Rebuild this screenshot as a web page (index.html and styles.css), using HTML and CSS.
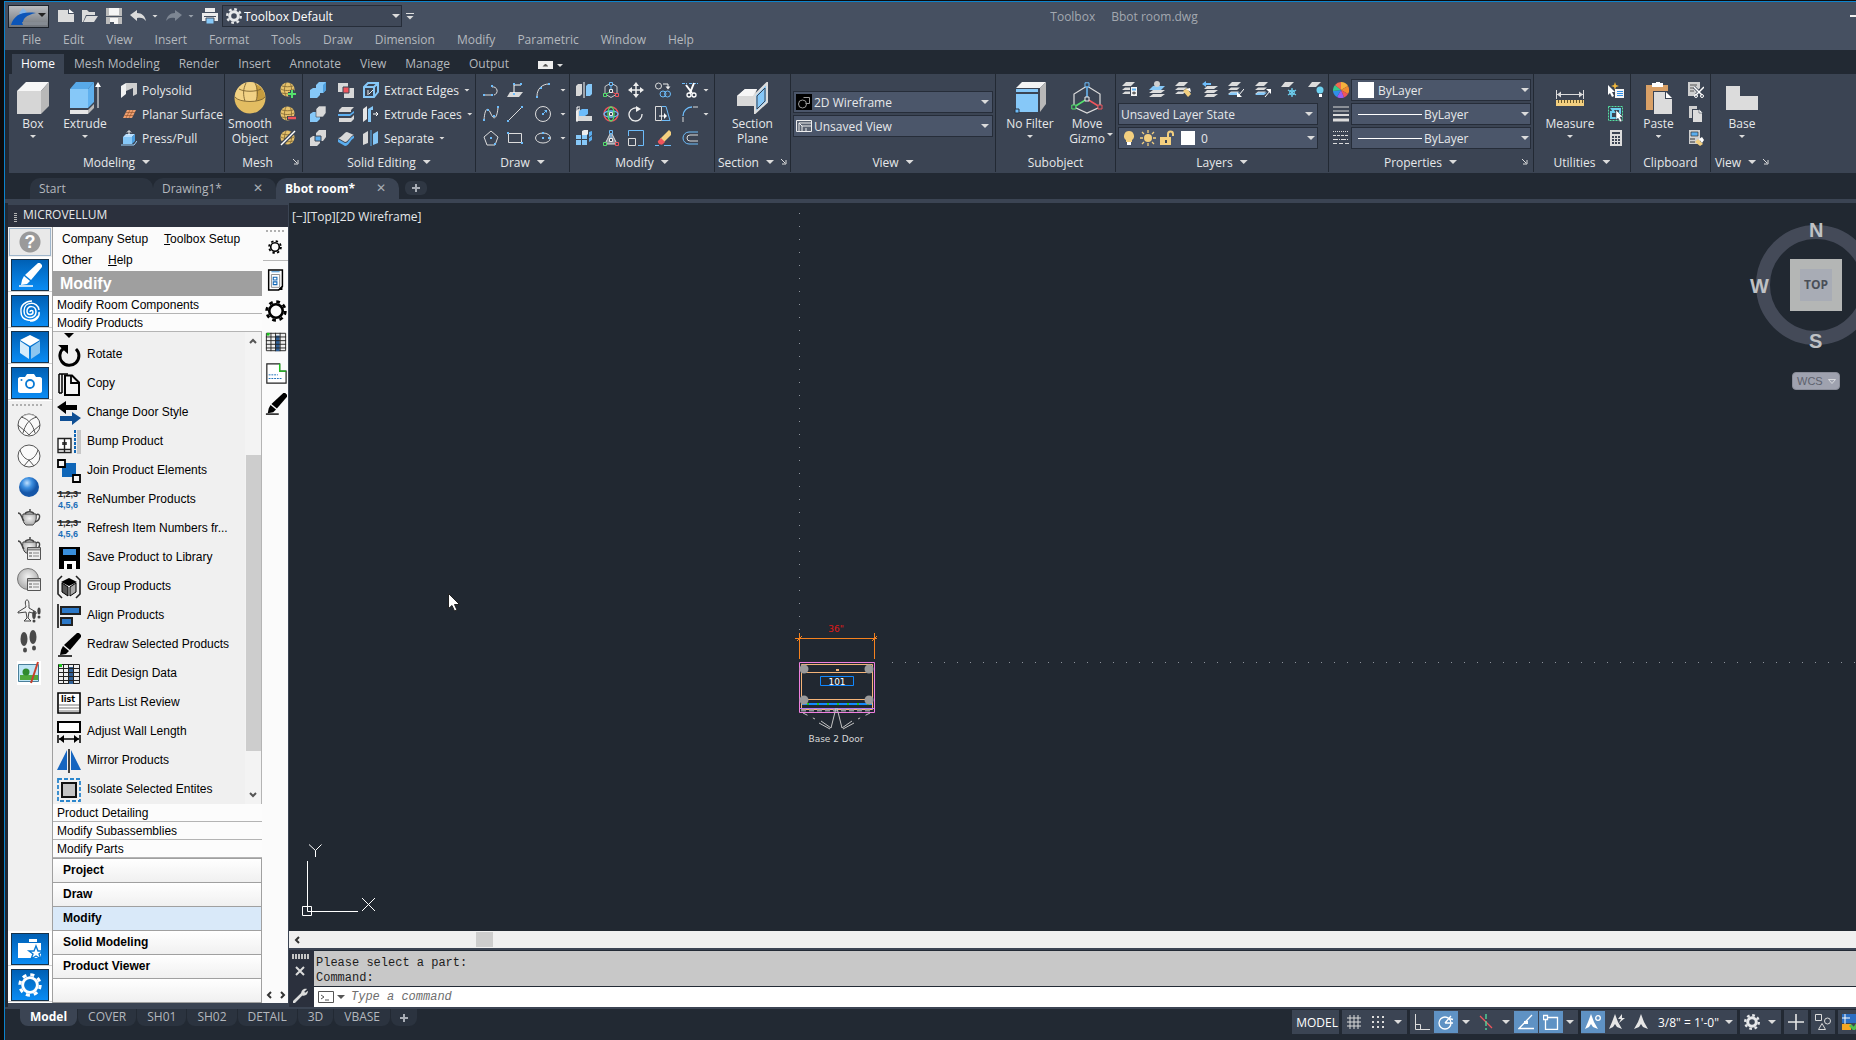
FILE: index.html
```
<!DOCTYPE html>
<html lang="en">
<head>
  <meta charset="UTF-8">
  <title>Toolbox - Bbot room.dwg</title>
  <meta name="viewport" content="width=device-width, initial-scale=1.0">
  <link rel="stylesheet" href="styles.css">
</head>
<body>

  <!-- icon sprite -->
  <svg class="sprite" aria-hidden="true">
    <defs>
      <linearGradient id="g-steel" x1="0" y1="0" x2="0" y2="1"><stop offset="0" stop-color="#b9bcc0"/><stop offset="1" stop-color="#6f747b"/></linearGradient>
      <radialGradient id="g-ball" cx=".4" cy=".3"><stop offset="0" stop-color="#bfe0ff"/><stop offset=".5" stop-color="#3d8fe0"/><stop offset="1" stop-color="#1556a8"/></radialGradient>
      <radialGradient id="g-grey" cx=".5" cy=".4"><stop offset="0" stop-color="#f4f4f4"/><stop offset="1" stop-color="#b5b5b5"/></radialGradient>
    </defs>
    <symbol id="i-new" viewBox="0 0 16 16"><path d="M0 2h10v4h6v8H0z" fill="#dcdcdc"/><path d="M11 1l5 4h-5z" fill="#fff"/></symbol>
    <symbol id="i-open" viewBox="0 0 16 16"><path d="M0 14V2h5l2 2h6v3H4L1 14z" fill="#dcdcdc"/><path d="M4.500 8H16l-4 6H1.500z" fill="#dcdcdc"/></symbol>
    <symbol id="i-save" viewBox="0 0 16 16"><path d="M0 0h16v16H0z" fill="#bcbcbc"/><path d="M3 0h10v7H3zM4 10h8v6H4z" fill="#f5f5f5"/><path d="M0 8h16v1H0zM4 14h4v2H4z" fill="#4a5362"/></symbol>
    <symbol id="i-undo" viewBox="0 0 16 16"><path d="M0 7l7-5v3c5 0 8 3 9 8-2-3-5-4-9-3v3z" fill="#dcdcdc"/></symbol>
    <symbol id="i-redo" viewBox="0 0 16 16"><path d="M16 7L9 2v3C4 5 1 8 0 13c2-3 5-4 9-3v3z" fill="#7d8693"/></symbol>
    <symbol id="i-print" viewBox="0 0 16 16"><path d="M3 0h10v4H3zM0 5h16v8H0z" fill="#ececec"/><path d="M2 8h12v1H2z" fill="#465061"/><path d="M4 10h8v6H4z" fill="#86c8f8" stroke="#465061"/></symbol>
    <symbol id="i-gear" viewBox="0 0 16 16"><g fill="none" stroke="currentColor"><circle cx="8" cy="8" r="4.300" stroke-width="3"/><circle cx="8" cy="8" r="6.800" stroke-width="2.400" stroke-dasharray="2.700 2.640"/></g></symbol>
    <symbol id="i-gear-thin" viewBox="0 0 16 16"><g fill="none" stroke="currentColor"><circle cx="8" cy="8" r="4.900" stroke-width="1.900"/><circle cx="8" cy="8" r="6.800" stroke-width="2" stroke-dasharray="2.700 2.640"/></g></symbol>
    <symbol id="i-launch" viewBox="0 0 6 6"><path d="M0 0l4 4M5 1v4H1" fill="none" stroke="#dcdcdc"/></symbol>

    <!-- modeling -->
    <symbol id="i-box" viewBox="0 0 32 32"><path d="M0 9L9 0h23l-8 9z" fill="#f7f7f7"/><path d="M0 9h24v23H0z" fill="#d6d6d6"/><path d="M24 9l8-9v24l-8 8z" fill="#b8b8b8"/></symbol>
    <symbol id="i-extrude" viewBox="0 0 32 32"><path d="M1 7l6-7h18l-6 7z" fill="#58a9e8"/><path d="M1 7h18v19H1z" fill="#86c8f8"/><path d="M19 7l6-7v20l-6 6z" fill="#5fb0ee"/><path d="M1 28h18v4H1z" fill="#e6e6e6"/><path d="M19 28l6-6v4l-6 6z" fill="#b8b8b8"/><path d="M29 4v22" stroke="#fff"/><path d="M26 5l3-5 3 5z" fill="#fff"/></symbol>
    <symbol id="i-polysolid" viewBox="0 0 16 16"><path d="M0 4l5-3v11l-5 4z" fill="#f2f2f2"/><path d="M5 1h11v11l-4 2V6L5 9z" fill="#cfcfcf"/></symbol>
    <symbol id="i-planar" viewBox="0 0 16 16"><path d="M6 4h9l-4 8H2z" fill="#f0a070"/><path d="M5 6.500h9M3.500 9.500h9M9 4l-4 8M12 4l-4 8" stroke="#8a4f2c" stroke-width=".6"/></symbol>
    <symbol id="i-press" viewBox="0 0 16 16"><path d="M2 7l3-3h9l-3 3z" fill="#b9e0ff"/><path d="M2 7h9v7H2z" fill="#86c8f8"/><path d="M11 7l3-3v7l-3 3z" fill="#4c9fe0"/><path d="M0 15h13l3-4" fill="none" stroke="#9ed4ff"/><path d="M8 5V1M6 2.500L8 .5l2 2" fill="none" stroke="#fff"/></symbol>
    <!-- mesh -->
    <symbol id="i-ball" viewBox="0 0 32 32"><circle cx="16" cy="16" r="15.500" fill="#e3bd62"/><path d="M1 15a15 15 0 0 1 30 0c-4 6-26 6-30 0z" fill="#f2d285"/><path d="M22 2c6 3 9 8 9 13-1 2-4 3-8 4z" fill="#c79d3f"/><g fill="none" stroke="#7c6330" stroke-width=".9"><path d="M1 15c4 6 26 6 30 0M5 7c5 3 17 3 22 0M12 1c-3 6-3 12-1 18M21 1c3 6 3 12 1 18"/></g></symbol>
    <symbol id="i-mball" viewBox="0 0 16 16"><circle cx="7.500" cy="7.500" r="7" fill="#e6c26c"/><g fill="none" stroke="#7c6330" stroke-width=".8"><path d="M1 7c3 2 10 2 13 0M2 4c3 1 8 1 11 0M2 11c3 1 8 1 11 0M6 1c-2 4-2 9 0 13M10 1c2 4 2 9 0 13"/></g></symbol>
    <symbol id="i-more" viewBox="0 0 16 16"><use href="#i-mball"/><path d="M12 8v8M8 12h8" stroke="#3b4453" stroke-width="4"/><path d="M12 8v8M8 12h8" stroke="#54e06c" stroke-width="2"/></symbol>
    <symbol id="i-less" viewBox="0 0 16 16"><use href="#i-mball"/><path d="M7 12h9" stroke="#3b4453" stroke-width="4"/><path d="M8 12h8" stroke="#f0555c" stroke-width="2.500"/></symbol>
    <symbol id="i-crease" viewBox="0 0 16 16"><use href="#i-mball"/><path d="M1 15L15 1" stroke="#3b4453" stroke-width="4"/><path d="M1 15L15 1" stroke="#fff" stroke-width="1.400"/></symbol>
    <!-- solid editing -->
    <symbol id="i-union" viewBox="0 0 16 16"><path d="M0 8l3-2h3V3l3-3h7v8l-3 3h-3v2l-3 3H0z" fill="#86c8f8"/><path d="M16 0v8l-3 3V3z" fill="#4f9fdd"/></symbol>
    <symbol id="i-subtract" viewBox="0 0 16 16"><path d="M0 8l3-2h7v7l-3 3H0z" fill="#86c8f8"/><path d="M6 3l3-3h7v7l-3 4H6z" fill="#d8d8d8" stroke="#3b4453" stroke-width=".6"/></symbol>
    <symbol id="i-intersect" viewBox="0 0 16 16"><path d="M0 8l3-2h7v7l-3 3H0zM6 3l3-3h7v7l-3 4H6z" fill="#d8d8d8"/><path d="M5 6h6v5H5z" fill="#5aaef0" stroke="#3b4453"/></symbol>
    <symbol id="i-interfere" viewBox="0 0 16 16"><path d="M0 1h10v4H5v5H0zM11 6h5v10H6v-5h5z" fill="#d8d8d8"/><path d="M5 5h6v6H5z" fill="#f0555c" stroke="#3b4453"/></symbol>
    <symbol id="i-slice" viewBox="0 0 16 16"><path d="M1 4l3-3h12l-3 3v2H1zM1 12h12l3-3v4l-3 3H1z" fill="#d8d8d8"/><path d="M0 8h12l4-3v2l-4 3H0z" fill="#5aaef0"/></symbol>
    <symbol id="i-thicken" viewBox="0 0 16 16"><path d="M0 8c4 0 6-6 9-6l7 3c-3 0-6 7-9 7z" fill="#d8d8d8"/><path d="M0 9v3l7 4c4 0 5-6 9-8V6c-4 0-5 7-9 7z" fill="#5aaef0"/></symbol>
    <symbol id="i-edges" viewBox="0 0 16 16"><path d="M1 5l4-4h10v9l-4 5H1zM1 5h10v10M11 5l4-4" fill="none" stroke="#86c8f8" stroke-width="2"/><path d="M6 12l4-4M5 8v5" stroke="#eee"/></symbol>
    <symbol id="i-faces" viewBox="0 0 16 16"><path d="M0 3l4-3v13l-4 3z" fill="#e6e6e6"/><path d="M5 3l5-3v4h-2v12H5z" fill="#86c8f8"/><path d="M10 8h5M13 6l2 2-2 2" fill="none" stroke="#fff"/></symbol>
    <symbol id="i-separate" viewBox="0 0 16 16"><path d="M0 4l5-3v12l-5 2z" fill="#d8d8d8"/><path d="M8 0v16" stroke="#5aaef0"/><path d="M10 4l5-3v12l-5 2z" fill="#86c8f8"/></symbol>
    <!-- draw -->
    <symbol id="i-pline" viewBox="0 0 16 16"><path d="M1 13h8M9 5a4 4 0 1 1 2 8" fill="none" stroke="#dcdcdc"/><path d="M0 12h2v2H0zM8 12h2v2H8zM8 3h2v2H8z" fill="#6dbcfa"/></symbol>
    <symbol id="i-3dpoly" viewBox="0 0 16 16"><path d="M3 10h13l-4 5H0z" fill="#d8d8d8"/><path d="M7 12V3h7" fill="none" stroke="#fff"/><path d="M6 11h2v2H6zM6 1h2v2H6zM13 1h2v2h-2z" fill="#6dbcfa"/></symbol>
    <symbol id="i-arc" viewBox="0 0 16 16"><path d="M2 14C2 7 7 2 14 2" fill="none" stroke="#dcdcdc"/><path d="M1 14h2v2H1zM5 5h2v2H5zM13 1h2v2h-2z" fill="#6dbcfa"/></symbol>
    <symbol id="i-spline" viewBox="0 0 16 16"><path d="M1 14C2 1 5 1 8 8s6 4 7-6" fill="none" stroke="#dcdcdc"/><path d="M0 13h2v2H0zM4 3h2v2H4zM10 9h2v2h-2zM14 0h2v2h-2z" fill="#6dbcfa"/></symbol>
    <symbol id="i-line" viewBox="0 0 16 16"><path d="M2 14L14 2" stroke="#dcdcdc"/><path d="M0 14h2v2H0zM14 0h2v2h-2z" fill="#6dbcfa"/></symbol>
    <symbol id="i-circle" viewBox="0 0 16 16"><circle cx="8" cy="8" r="7.500" fill="none" stroke="#dcdcdc"/><path d="M7 7h2v2H7zM9 4h3v3" fill="#6dbcfa"/><path d="M8 8l4-4" stroke="#6dbcfa"/></symbol>
    <symbol id="i-polygon" viewBox="0 0 16 16"><path d="M8 1l7 6-3 8H4L1 7z" fill="none" stroke="#dcdcdc"/><path d="M7 7h2v2H7zM11 13h2v2h-2z" fill="#6dbcfa"/></symbol>
    <symbol id="i-rect" viewBox="0 0 16 16"><path d="M1.500 3.500h13v9h-13z" fill="none" stroke="#dcdcdc"/><path d="M0 2h2v2H0zM14 12h2v2h-2z" fill="#6dbcfa"/></symbol>
    <symbol id="i-ellipse" viewBox="0 0 16 16"><ellipse cx="8" cy="8" rx="7.500" ry="5" fill="none" stroke="#dcdcdc"/><path d="M7 7h2v2H7zM13 7h2v2h-2zM7 2h2v2H7z" fill="#6dbcfa"/></symbol>
    <!-- modify -->
    <symbol id="i-mirror3d" viewBox="0 0 16 16"><path d="M0 4l2-2h4v10l-2 2H0z" fill="#d8d8d8"/><path d="M8 0v16" stroke="#fff"/><path d="M10 4l2-2h4v10l-2 2h-4z" fill="#86c8f8"/></symbol>
    <symbol id="i-gizmo" viewBox="0 0 16 16"><path d="M8 1l6 3.500V12l-6 3.500L2 12V4.500z" fill="none" stroke="#c8c8c8"/><path d="M8 9V2" stroke="#6dbcfa"/><path d="M8 9l-6 4" stroke="#54e06c"/><path d="M8 9l6 4" stroke="#f0555c"/><path d="M6.500 .5h3v3h-3z" fill="#3b4453" stroke="#6dbcfa"/><path d="M.5 11.500h3v3h-3z" fill="#3b4453" stroke="#54e06c"/><path d="M12.500 11.500h3v3h-3z" fill="#3b4453" stroke="#f0555c"/><path d="M6.500 7.500h3v3h-3z" fill="#3b4453" stroke="#eee"/></symbol>
    <symbol id="i-move" viewBox="0 0 16 16"><path d="M8 2v12M2 8h12" stroke="#eee" stroke-width="1.500"/><path d="M5 4l3-4 3 4zM5 12l3 4 3-4zM4 5L0 8l4 3zM12 5l4 3-4 3z" fill="#eee"/></symbol>
    <symbol id="i-copy3" viewBox="0 0 16 16"><g fill="none"><circle cx="3.500" cy="4" r="3" stroke="#dcdcdc"/><circle cx="8" cy="12" r="3" stroke="#6dbcfa"/><circle cx="12.500" cy="12" r="3" stroke="#6dbcfa"/><path d="M8 2h5v4" stroke="#eee"/></g><path d="M10.500 4.500h5l-2.500 3z" fill="#eee"/></symbol>
    <symbol id="i-trim" viewBox="0 0 16 16"><path d="M0 1.500h5M7 1.500h9" stroke="#6dbcfa" stroke-dasharray="3 1"/><path d="M4 3l6 8M12 1l-4 10" stroke="#fff" stroke-width="2"/><circle cx="7" cy="13" r="2" fill="none" stroke="#fff" stroke-width="1.300"/><circle cx="12" cy="13" r="2" fill="none" stroke="#fff" stroke-width="1.300"/></symbol>
    <symbol id="i-align3d" viewBox="0 0 16 16"><path d="M0 5l4-3v8h12v5H0z" fill="#d8d8d8"/><path d="M3 5l3-2h6v5l-3 2H3z" fill="#6dbcfa"/><path d="M1 16V1h3" stroke="#fff" fill="none"/></symbol>
    <symbol id="i-rot3d" viewBox="0 0 16 16"><g fill="none"><circle cx="8" cy="8" r="7" stroke="#f0555c" stroke-width="1.400"/><ellipse cx="8" cy="8" rx="7" ry="3" stroke="#6dbcfa" stroke-width="1.300"/><ellipse cx="8" cy="8" rx="3" ry="7" stroke="#54e06c" stroke-width="1.300"/></g><path d="M6.500 6.500h3v3h-3z" fill="#3b4453" stroke="#eee"/></symbol>
    <symbol id="i-rotate" viewBox="0 0 16 16"><path d="M11 3a6.500 6.500 0 1 0 3 5" fill="none" stroke="#eee" stroke-width="1.300"/><path d="M8 0l5 3-5 3z" fill="#eee"/></symbol>
    <symbol id="i-stretch" viewBox="0 0 16 16"><path d="M.5 .5h6v14h-6z" fill="none" stroke="#dcdcdc"/><path d="M7 .5h4l4 14H7" fill="none" stroke="#6dbcfa"/><path d="M4 10h5" stroke="#fff"/><path d="M9 7l3 3-3 3z" fill="#fff"/></symbol>
    <symbol id="i-fillet" viewBox="0 0 16 16"><path d="M1 16v-5" stroke="#dcdcdc"/><path d="M1 10c0-5 4-9 9-9" fill="none" stroke="#6dbcfa" stroke-width="1.400"/><path d="M11 1h5" stroke="#dcdcdc"/></symbol>
    <symbol id="i-array" viewBox="0 0 16 16"><path d="M0 5h5v4H0zM6 5h5v4H6zM0 10h5v5H0zM6 10h5v5H6z" fill="#86c8f8"/><path d="M6 1l2-1h4v4l-1 1H6z" fill="#eee"/><path d="M13 2l3-1v4l-3 2zM13 8l3-2v4l-3 2z" fill="#5aaef0"/></symbol>
    <symbol id="i-scale3d" viewBox="0 0 16 16"><path d="M8 2l6 12H2z" fill="#8a909a" stroke="#dcdcdc"/><path d="M8 9V2" stroke="#6dbcfa"/><path d="M6.500 .5h3v3h-3z" fill="#3b4453" stroke="#6dbcfa"/><path d="M.5 12.500h3v3h-3z" fill="#3b4453" stroke="#54e06c"/><path d="M12.500 12.500h3v3h-3z" fill="#3b4453" stroke="#f0555c"/><path d="M6.500 8.500h3v3h-3z" fill="#3b4453" stroke="#eee"/></symbol>
    <symbol id="i-scale" viewBox="0 0 16 16"><path d="M.5 8.500h7v7h-7z" fill="none" stroke="#dcdcdc"/><path d="M.5 6V.5h15v15H10" fill="none" stroke="#6dbcfa"/></symbol>
    <symbol id="i-erase" viewBox="0 0 16 16"><path d="M5 9L14 0l2 2v3l-8 8z" fill="#f3cf7f"/><path d="M3 11l3-3 4 4-2 2c-2 2-6-1-5-3z" fill="#f0555c"/><path d="M0 15.500h4M9 15.500h7" stroke="#6dbcfa"/></symbol>
    <symbol id="i-offset" viewBox="0 0 16 16"><path d="M16 2H7a6 6 0 0 0 0 12h9" fill="none" stroke="#6dbcfa"/><path d="M16 5H8a3 3 0 0 0 0 6h8" fill="none" stroke="#dcdcdc"/></symbol>
    <!-- section / subobject -->
    <symbol id="i-section" viewBox="0 0 32 32"><path d="M0 14l8-7h12l-2 6v11H0z" fill="#d8d8d8"/><path d="M0 14l8-7h12l-4 7z" fill="#f6f6f6"/><path d="M18 13L30 1v19L18 31z" fill="#86c8f8" stroke="#dcdcdc" stroke-width="2"/><path d="M20 14l8-8v13l-8 8z" fill="none" stroke="#3b4453"/></symbol>
    <symbol id="i-filter" viewBox="0 0 32 32"><path d="M2 6l6-6h24l-6 6z" fill="#f4f4f4"/><path d="M26 6l6-6v22l-6 8z" fill="#b8b8b8"/><path d="M2 7h22v3H2zM2 12h22v18H2z" fill="#86c8f8"/><path d="M1 27h4v4H1z" fill="#6dbcfa" stroke="#2b333f"/></symbol>
    <symbol id="i-gizmo-l" viewBox="0 0 32 32"><path d="M16 4l13 8v13l-13 6-13-6V12z" fill="none" stroke="#dcdcdc" stroke-width="1.200"/><path d="M16 17V4" stroke="#6dbcfa" stroke-width="1.500"/><path d="M16 17L3 25" stroke="#54e06c" stroke-width="1.500"/><path d="M16 17l13 8" stroke="#f0555c" stroke-width="1.500"/><path d="M14 .8h4v4h-4z" fill="#3b4453" stroke="#6dbcfa"/><path d="M.8 23h4v4h-4z" fill="#3b4453" stroke="#54e06c"/><path d="M27 23h4v4h-4z" fill="#3b4453" stroke="#f0555c"/><path d="M14 15h4v4h-4z" fill="#3b4453" stroke="#eee"/></symbol>
    <!-- layers -->
    <symbol id="i-stack" viewBox="0 0 16 16"><path d="M4 1h9l-4 4H0zM3 6.500h9L9 9H0zM3 10.500h8L8 13H0z" fill="#dcdcdc"/></symbol>
    <symbol id="i-lay1" viewBox="0 0 16 16"><use href="#i-stack"/><path d="M8.500 5.500h7v10h-7z" fill="#f4f4f4" stroke="#3b4453"/><path d="M10 7.500h4v2h-4z" fill="#5aaef0"/><path d="M10 12h4M12 10.500v3" stroke="#333"/></symbol>
    <symbol id="i-lay2" viewBox="0 0 16 16"><path d="M4 9h12l-4 3H0zM4 13h12l-4 3H0z" fill="#dcdcdc"/><path d="M4 5h12l-4 4H0z" fill="#86c8f8"/><circle cx="8" cy="3" r="3" fill="#cfcfcf"/></symbol>
    <symbol id="i-lay3" viewBox="0 0 16 16"><use href="#i-stack"/><path d="M8 10l4-3 4 6-3 3z" fill="#f3cf7f"/><path d="M11 8l4-1 1 4z" fill="#fff"/></symbol>
    <symbol id="i-lay4" viewBox="0 0 16 16"><path d="M5 5h11l-4 3H2zM5 9h11l-4 3H2zM5 13h11l-4 3H2z" fill="#dcdcdc"/><path d="M0 3l4-3v2h5v2H4v2z" fill="#6dbcfa"/></symbol>
    <symbol id="i-lay5" viewBox="0 0 16 16"><use href="#i-stack"/><path d="M3 11.500h9L9 14H0z" fill="#86c8f8"/><path d="M16 8l-5 6" stroke="#fff"/><path d="M9 16v-5l5 5z" fill="#fff"/></symbol>
    <symbol id="i-lay6" viewBox="0 0 16 16"><use href="#i-stack"/><path d="M3 11.500h9L9 14H0z" fill="#86c8f8"/><path d="M10 16l5-6" stroke="#fff"/><path d="M16 8v5l-5-5z" fill="#fff"/></symbol>
    <symbol id="i-lay7" viewBox="0 0 16 16"><path d="M4 1h9L8 6H0z" fill="#dcdcdc"/><path d="M11 7v9M7 9l8 5M15 9l-8 5" stroke="#6dd0f0" stroke-width="1.300"/><circle cx="11" cy="11.500" r="2.500" fill="none" stroke="#6dd0f0"/></symbol>
    <symbol id="i-lay8" viewBox="0 0 16 16"><path d="M4 1h9L8 6H0z" fill="#dcdcdc"/><circle cx="12" cy="9" r="3.500" fill="#6dd0f0"/><path d="M11 13h3v3h-3z" fill="#fff"/></symbol>
    <symbol id="i-bulb" viewBox="0 0 16 16"><path d="M8 1a5 5 0 0 1 3 9v2H5v-2a5 5 0 0 1 3-9z" fill="#f3cf7f"/><path d="M6 12h4v3H6z" fill="#fff"/></symbol>
    <symbol id="i-sun" viewBox="0 0 16 16"><circle cx="8" cy="8" r="4" fill="#f3cf7f"/><path d="M8 0v3M8 13v3M0 8h3M13 8h3M2 2l2 2M12 12l2 2M14 2l-2 2M2 14l2-2" stroke="#f3cf7f" stroke-width="1.300"/></symbol>
    <symbol id="i-lock" viewBox="0 0 16 16"><path d="M1 7h11v8H1z" fill="#f3cf7f"/><path d="M9 7V4a2.500 2.500 0 0 1 5 0v2" fill="none" stroke="#f3cf7f" stroke-width="2"/><path d="M6 10h2v3H6z" fill="#3b4453"/></symbol>
    <!-- properties -->
    <symbol id="i-wheel" viewBox="0 0 16 16"><path d="M8 8L8 0a8 8 0 0 1 7 4z" fill="#f7b13c"/><path d="M8 8l7-4a8 8 0 0 1 0 8z" fill="#f28a30"/><path d="M8 8l7 4a8 8 0 0 1-4 3.500z" fill="#f0555c"/><path d="M8 8l3 7.500a8 8 0 0 1-7-.5z" fill="#9a5cf0"/><path d="M8 8l-4 7a8 8 0 0 1-4-6z" fill="#2f8fe8"/><path d="M8 8L0 9a8 8 0 0 1 2-6z" fill="#35c98e"/><path d="M8 8L2 3a8 8 0 0 1 6-3z" fill="#ef6a50"/></symbol>
    <symbol id="i-lweight" viewBox="0 0 16 16"><path d="M0 1h16M0 5h16" stroke="#dcdcdc"/><path d="M0 9h16" stroke="#dcdcdc" stroke-width="2"/><path d="M0 14h16" stroke="#dcdcdc" stroke-width="3"/></symbol>
    <symbol id="i-ltype" viewBox="0 0 16 16"><g stroke="#dcdcdc"><path d="M0 1.500h16" stroke-dasharray="1 1"/><path d="M0 5.500h16" stroke-dasharray="3 1"/><path d="M0 9.500h16" stroke-dasharray="5 1 1 1"/><path d="M0 13.500h16" stroke-dasharray="4 2"/></g></symbol>
    <!-- utilities / clipboard / view -->
    <symbol id="i-measure" viewBox="0 0 32 32"><path d="M2.500 8v9M29.500 8v9M3 12.500h26" stroke="#dcdcdc" fill="none"/><path d="M3 12.500l4-3v6zM29 12.500l-4-3v6z" fill="#dcdcdc"/><path d="M2 18h28v6H2z" fill="#f3cf7f"/><path d="M4 19.500h25" stroke="#6b5a2a" stroke-width="3" stroke-dasharray="1 2"/></symbol>
    <symbol id="i-qsel" viewBox="0 0 16 16"><path d="M7 0l1 3 3 1-3 1-1 3-1-3-3-1 3-1z" fill="#f3b83c"/><path d="M0 3l7 7H4l2 4-2 1-2-4-2 2z" fill="#fff"/><path d="M7 7h9v9H7z" fill="#f4f4f4"/><path d="M9 9.500h6M9 11.500h6M9 13.500h6" stroke="#2f8fe8"/></symbol>
    <symbol id="i-selall" viewBox="0 0 16 16"><path d="M.5 .5h14v14H.5z" fill="none" stroke="#54e0a0" stroke-dasharray="2 1"/><path d="M4 3h8v4h-2v5H3V6h3z" fill="none" stroke="#6dd0f0" stroke-width="2"/><path d="M8 4l7 7h-3l2 4-2 1-2-4-2 2z" fill="#fff" stroke="#3b4453" stroke-width=".5"/></symbol>
    <symbol id="i-calc" viewBox="0 0 16 16"><path d="M2 0h12v16H2z" fill="#dcdcdc"/><path d="M4 2h8v2H4z" fill="#3b4453"/><path d="M4 7h8M4 10h8M4 13h8" stroke="#3b4453" stroke-width="2" stroke-dasharray="2 1"/></symbol>
    <symbol id="i-paste" viewBox="0 0 32 32"><path d="M3 3h22v25H3z" fill="#d9a066"/><path d="M9 1h4V0h4v1h3v4H9z" fill="#fff"/><path d="M10 9h20v23H10z" fill="#3b4453"/><path d="M11 10h11v7h7v15H11z" fill="#dcdcdc"/><path d="M23 10l6 6h-6z" fill="#fff"/></symbol>
    <symbol id="i-cut" viewBox="0 0 16 16"><path d="M0 0h12v6l-3 3v5H0z" fill="#cfcfcf"/><path d="M2 3h7M2 6h5M2 9h4" stroke="#555"/><path d="M6 5l9 9M16 5l-8 8" stroke="#3b4453" stroke-width="3"/><path d="M6 5l8 8M16 5l-8 8" stroke="#fff" stroke-width="1.500"/><circle cx="8" cy="14" r="1.500" fill="none" stroke="#fff"/><circle cx="14" cy="14" r="1.500" fill="none" stroke="#fff"/></symbol>
    <symbol id="i-copyclip" viewBox="0 0 16 16"><path d="M1 0h8v3H4v9H1z" fill="#cfcfcf"/><path d="M5 4h6l3 3v9H5z" fill="#dcdcdc"/><path d="M11 3l4 4h-4z" fill="#fff" stroke="#3b4453" stroke-width=".6"/></symbol>
    <symbol id="i-match" viewBox="0 0 16 16"><path d="M1 0h11v14H1z" fill="#cfcfcf"/><path d="M3 2h7v4H3z" fill="#5aaef0" stroke="#333" stroke-width=".7"/><path d="M2 9h5M2 12h5" stroke="#333"/><path d="M7 12l3-3 5 5-3 2z" fill="#f3cf7f"/><path d="M11 9l3-2 2 3-2 3z" fill="#fff"/></symbol>
    <symbol id="i-base" viewBox="0 0 32 32"><path d="M0 4h14v10h18v14H0z" fill="#dcdcdc"/></symbol>

    <!-- palette -->
    <symbol id="p-pen" viewBox="0 0 24 24"><path d="M20 0h2l2 2v2L13 17l-6-5z" fill="currentColor"/><path d="M6 13l6 5-3 3-6 1 1-5z" fill="currentColor"/><path d="M1 23h14" stroke="currentColor" stroke-width="1.500"/></symbol>
    <symbol id="p-spiral" viewBox="0 0 24 24"><path d="M12 13c0-2 3-2 3 0 0 3-6 4-6-1 0-6 9-6 9 1 0 7-12 8-12-1C6 2 20 2 21 11M3 13c0 9 12 11 17 4M12 22c6 0 10-4 9-9M3 13C2 6 8 2 14 2" fill="none" stroke="#fff" stroke-width="1.500"/></symbol>
    <symbol id="p-cube" viewBox="0 0 24 24"><path d="M12 0l10 5-10 6L2 5z" fill="#fff"/><path d="M2 6l9 6v12L2 18z" fill="#d6ecfb"/><path d="M22 6l-9 6v12l9-6z" fill="#8cc6f0"/></symbol>
    <symbol id="p-camera" viewBox="0 0 24 24"><path d="M2 6h5l2-3h7l2 3h4c1 0 2 1 2 2v12c0 1-1 2-2 2H2c-1 0-2-1-2-2V8c0-1 1-2 2-2z" fill="#fff"/><circle cx="12" cy="13" r="4" fill="#fff" stroke="#0a7ad4" stroke-width="1.800"/><circle cx="3.500" cy="9" r="1" fill="#0a7ad4"/></symbol>
    <symbol id="p-wire" viewBox="0 0 24 24"><g fill="none" stroke="#555"><circle cx="12" cy="12" r="11" fill="#fafafa"/><path d="M4 4c8 2 12 8 14 16M20 4c-8 2-12 8-14 16M1 12c4 4 8 6 11 10M23 12c-4 4-8 6-11 10"/><path d="M6 3c4-2 8-2 12 0" stroke="#bbb"/></g></symbol>
    <symbol id="p-wire2" viewBox="0 0 24 24"><g fill="none" stroke="#555"><circle cx="12" cy="12" r="11" fill="#fafafa"/><path d="M3 6c2 6 5 9 9 10 4-1 7-4 9-10M12 16l-5 6M12 16l5 6"/></g></symbol>
    <symbol id="p-ball" viewBox="0 0 24 24"><circle cx="12" cy="12" r="10" fill="url(#g-ball)"/></symbol>
    <symbol id="p-pot" viewBox="0 0 24 24"><path d="M6 8h13c1 6-1 9-3 11H9C6 17 5 12 6 8z" fill="url(#g-grey)" stroke="#444"/><path d="M1 7c4 0 3 5 6 8M19 9c5-3 5 5-1 7M8 8c1-3 8-3 9 0M12 4h2" fill="none" stroke="#444" stroke-width="1.400"/></symbol>
    <symbol id="p-form" viewBox="0 0 24 24"><path d="M10.500 10.500h13v12h-13z" fill="#eee" stroke="#555"/><path d="M11 12.500h12" stroke="#888" stroke-width="2"/><path d="M12 16h3M12 19h3" stroke="#555"/><path d="M16 16h6M16 19h6" stroke="#888"/></symbol>
    <symbol id="p-pot2" viewBox="0 0 24 24"><use href="#p-pot" transform="translate(0 -3)"/><use href="#p-form"/></symbol>
    <symbol id="p-sphere" viewBox="0 0 24 24"><circle cx="11" cy="11" r="10.500" fill="url(#g-grey)" stroke="#777"/><use href="#p-form"/></symbol>
    <symbol id="p-feet" viewBox="0 0 24 24"><g fill="#4a4a4a"><ellipse cx="7" cy="9" rx="3.500" ry="7"/><ellipse cx="16" cy="7" rx="3.500" ry="7"/><ellipse cx="8" cy="20" rx="2" ry="2.500"/><ellipse cx="17" cy="18" rx="2" ry="2.500"/></g></symbol>
    <symbol id="p-plane" viewBox="0 0 24 24"><path d="M10 1c2 0 2 3 2 8l7 4v2l-7-2-1 6 3 3H7l3-3-1-6-8 1v-1l8-5c-1-4-1-7 1-7z" fill="#f2f2f2" stroke="#444"/><g fill="#444"><ellipse cx="17" cy="16" rx="1.800" ry="4"/><ellipse cx="22" cy="12" rx="1.600" ry="3.500"/><circle cx="17" cy="22" r="1.500"/><circle cx="22" cy="18" r="1.500"/></g></symbol>
    <symbol id="p-pic" viewBox="0 0 24 24"><path d="M0 0h24v24H0z" fill="#fff"/><path d="M1.500 3.500h20v17h-20z" fill="#bfe6f6" stroke="#4a7f9a"/><path d="M3 14h18v5H3z" fill="#4fa83c"/><circle cx="9" cy="11" r="3.500" fill="#2f8a2f"/><path d="M21 1l-7 21" stroke="#c8402c" stroke-width="2"/></symbol>
    <symbol id="p-fav" viewBox="0 0 24 24"><path d="M11 2h8v3h-8zM0 6h23v15H0z" fill="#fff"/><path d="M18 9l2 5h5l-4 3 2 5-5-3-5 3 2-5-4-3h5z" fill="#fff" stroke="#0a7ad4" stroke-width="1.400"/></symbol>

    <symbol id="p-movetip" viewBox="0 0 24 24"><path d="M12 24l-5-5h10z" fill="#000"/></symbol>
    <symbol id="p-rotate" viewBox="0 0 24 24"><path d="M7 5a9.500 9.500 0 1 0 12 1" fill="none" stroke="#000" stroke-width="3"/><path d="M1 2h10v9z" fill="#000"/></symbol>
    <symbol id="p-copy" viewBox="0 0 24 24"><path d="M2 2v19M5 21V2h6M2 2h8M2 21h3" fill="none" stroke="#000" stroke-width="1.500"/><path d="M8 3.500h7l7 7V23H8z" fill="#f5f5f5" stroke="#000" stroke-width="2"/><path d="M14 3v8h8" fill="none" stroke="#000" stroke-width="1.800"/></symbol>
    <symbol id="p-swap" viewBox="0 0 24 24"><path d="M0 6l9-6v4h11v5H9v4z" fill="#000"/><path d="M24 17l-9-6v4H3v5h12v4z" fill="#0f4f94"/></symbol>
    <symbol id="p-bump" viewBox="0 0 24 24"><path d="M1 8.500h13v14H1zM7.500 8v14M1 19.500h13M6 12v3M9 12v3" fill="#fff" stroke="#222" stroke-width="1.400"/><path d="M18 0v24" stroke="#1267b5" stroke-width="2" stroke-dasharray="3 1"/><path d="M20 0h4v24h-4z" fill="#c8c8c8"/></symbol>
    <symbol id="p-join" viewBox="0 0 24 24"><path d="M5 4h14v14H5z" fill="#0f66b8"/><path d="M1 1h7v7H1zM16 16h7v7h-7z" fill="#f5f5f5" stroke="#000" stroke-width="1.800"/></symbol>
    <symbol id="p-floppy" viewBox="0 0 24 24"><path d="M2 1h21v22H2z" fill="#000"/><path d="M6 3h13v6H6z" fill="#3a8fdc"/><path d="M7 15h12v8H7z" fill="#fff"/><path d="M10 18h5v5h-5z" fill="#000"/></symbol>
    <symbol id="p-group" viewBox="0 0 24 24"><path d="M12 3l8 4-8 4-8-4z" fill="#000"/><path d="M5 8l6 4v9l-6-4z" fill="#555" stroke="#000"/><path d="M19 8l-6 4v9l6-4z" fill="#aaa" stroke="#000"/><path d="M5 1l-4 4v14l4 4M19 1l4 4v14l-4 4" fill="none" stroke="#222" stroke-width="1.600"/></symbol>
    <symbol id="p-align" viewBox="0 0 24 24"><path d="M1 0v24" stroke="#000" stroke-width="1.500"/><path d="M4 3h19v7H4zM4 14h11v7H4z" fill="#2b78c8" stroke="#222" stroke-width="2"/></symbol>
    <symbol id="p-grid" viewBox="0 0 24 24"><path d="M1.500 2.500h21v19h-21z" fill="#eee" stroke="#222"/><path d="M11 5h5v17h-5z" fill="#2f5f96"/><path d="M1 6.500h22M1 10.500h22M1 14.500h22M1 18.500h22M6.500 2v20M11.500 2v20M16.500 2v20" stroke="#222"/><path d="M2 2h3v3H2z" fill="#1ec31e"/></symbol>
    <symbol id="p-wall" viewBox="0 0 24 24"><path d="M1 2h22v10H1z" fill="#fff" stroke="#000" stroke-width="2"/><path d="M1 15v8M23 15v8M2 19h20" stroke="#000" stroke-width="1.500"/><path d="M2 19l5-4v8zM22 19l-5-4v8z" fill="#000"/></symbol>
    <symbol id="p-mirror" viewBox="0 0 24 24"><path d="M10 1v20H0zM14 1v20h10z" fill="#1565c0"/><path d="M12 0v24" stroke="#444" stroke-width="2"/></symbol>
    <symbol id="p-iso" viewBox="0 0 24 24"><path d="M1 1h22v22H1z" fill="none" stroke="#2b86cc" stroke-width="1.800" stroke-dasharray="4 2"/><path d="M5 5h14v14H5z" fill="#c4c4c4" stroke="#111" stroke-width="2"/></symbol>
    <symbol id="p-form2" viewBox="0 0 24 24"><path d="M4 1h15v18l-4 4H4z" fill="#fff" stroke="#000" stroke-width="1.600"/><path d="M7 3h9" stroke="#2b86cc"/><path d="M7 6h9v14H7z" fill="none" stroke="#888"/><path d="M9 9h4v3H9zM9 14h4v3H9z" fill="none" stroke="#1267b5" stroke-width="1.200"/><path d="M19 18l-5 5h5z" fill="#000"/></symbol>
    <symbol id="p-dwg" viewBox="0 0 24 24"><path d="M2 2h14v8h7v13H2z" fill="#fff" stroke="#222" stroke-width="1.300"/><path d="M16 2v8h7" fill="none" stroke="#1ec31e" stroke-width="1.500"/><path d="M4 14h10M4 18h15" stroke="#1267b5" stroke-dasharray="2 1"/></symbol>

    <!-- command line / status bar -->
    <symbol id="i-wrench" viewBox="0 0 16 16"><path d="M1 15l9-9" stroke="#dcdcdc" stroke-width="3" stroke-linecap="round"/><path d="M9 7c-1-4 2-7 6-6l-3 3 1 1 3-2c0 4-3 6-6 5z" fill="#dcdcdc"/></symbol>
    <symbol id="s-grid" viewBox="0 0 16 16"><path d="M4 1v14M8 1v14M12 1v14M1 4h14M1 8h14M1 12h14" stroke="#dcdcdc"/></symbol>
    <symbol id="s-snap" viewBox="0 0 16 16"><path d="M2 3h14M2 8h14M2 13h14" stroke="#dcdcdc" stroke-width="2" stroke-dasharray="2 3"/></symbol>
    <symbol id="s-ortho" viewBox="0 0 16 16"><path d="M1.500 0v15.500H16M1.500 10.500h5v5" fill="none" stroke="#dcdcdc"/></symbol>
    <symbol id="s-polar" viewBox="0 0 16 16"><circle cx="7" cy="9" r="6" fill="none" stroke="#fff" stroke-width="1.300"/><path d="M7 9l6-7M7 9h8M11 4.500l4 1" fill="none" stroke="#fff" stroke-width="1.300"/></symbol>
    <symbol id="s-iso" viewBox="0 0 16 16"><path d="M2 2l12 12" stroke="#f0555c" stroke-width="1.300"/><path d="M8 0v16" stroke="#54e0a0" stroke-width="1.300" stroke-dasharray="5 2"/></symbol>
    <symbol id="s-track" viewBox="0 0 16 16"><path d="M14 1L1 14.500h15" fill="none" stroke="#fff" stroke-width="1.300"/><path d="M6 7h4v3H6z" fill="#fff"/></symbol>
    <symbol id="s-osnap" viewBox="0 0 16 16"><path d="M2.500 3.500h12v12h-12z" fill="none" stroke="#fff" stroke-width="1.300"/><path d="M.5 1.500h4v4h-4z" fill="#5f92c4" stroke="#fff" stroke-width="1.300"/></symbol>
    <symbol id="s-man" viewBox="0 0 16 16"><path d="M8 0l3 8 4 7-5-2-2-3-2 3-5 2 4-7z" fill="#e6e6e6"/></symbol>
    <symbol id="s-man1" viewBox="0 0 16 16"><path d="M6 0l3 8 4 7-5-2-2-3-2 3-4 2 3-7z" fill="#fff"/><circle cx="13" cy="4" r="2.300" fill="none" stroke="#fff" stroke-width="1.300"/></symbol>
    <symbol id="s-man2" viewBox="0 0 16 16"><path d="M6 0l3 8 4 7-5-2-2-3-2 3-4 2 3-7z" fill="#e6e6e6"/><path d="M13 0l-4 5h3l-2 4 6-5h-3z" fill="#e6e6e6"/></symbol>
    <symbol id="s-plus" viewBox="0 0 16 16"><path d="M8 0v16M0 8h16" stroke="#e6e6e6" stroke-width="1.600"/></symbol>
    <symbol id="s-shapes" viewBox="0 0 16 16"><g fill="none" stroke="#dcdcdc"><path d="M.5 .5h6v6h-6zM7 9.500l3.500 6h-7z"/><circle cx="12.500" cy="7" r="3"/></g></symbol>
    <symbol id="s-gfx" viewBox="0 0 16 16"><path d="M0 0h16v9H0z" fill="#2b6fc4"/><path d="M0 10h9v6H0z" fill="#f5a623"/><path d="M3 0v10M0 4h8" stroke="#fff"/><path d="M8 11l4 4 4-6" fill="none" stroke="#4fc04f" stroke-width="3"/></symbol>
  </svg>

  <div class="app">
    <header class="titlebar">
      <div class="title-row">
        <button class="app-button" aria-label="Application menu">
          <svg viewBox="0 0 39 21"><path d="M0 0h39v21H0z" fill="url(#g-steel)"/><path d="M10 7l4-5 4 4-5 3z" fill="#7fb2e8"/><path d="M2 19C5 9 13 5 27 7 17 9 13 13 14 19z" fill="#0c55b8"/><path d="M13 16h25v3H14z" fill="#858b93"/><path d="M29 7h8l-4 4z" fill="#222"/></svg>
        </button>
        <div class="quick">
          <button aria-label="New"><svg class="i16"><use href="#i-new"/></svg></button>
          <button aria-label="Open"><svg class="i16"><use href="#i-open"/></svg></button>
          <button aria-label="Save"><svg class="i16"><use href="#i-save"/></svg></button>
          <button aria-label="Undo"><svg class="i16"><use href="#i-undo"/></svg><i class="caret sm"></i></button>
          <button aria-label="Redo"><svg class="i16"><use href="#i-redo"/></svg><i class="caret sm dim"></i></button>
          <button aria-label="Print"><svg class="i16"><use href="#i-print"/></svg></button>
        </div>
        <div class="combo workspace">
          <svg class="i16"><use href="#i-gear"/></svg>
          <select aria-label="Workspace"><option>Toolbox Default</option></select>
          <i class="caret"></i>
        </div>
        <button class="customize" aria-label="Customize toolbar"><i class="caret"></i></button>
        <div class="doc-title"><span>Toolbox</span><span>Bbot room.dwg</span></div>
        <button class="minimize" aria-label="Minimize"></button>
      </div>
      <nav class="menubar">
        <a href="#">File</a><a href="#">Edit</a><a href="#">View</a><a href="#">Insert</a><a href="#">Format</a><a href="#">Tools</a><a href="#">Draw</a><a href="#">Dimension</a><a href="#">Modify</a><a href="#">Parametric</a><a href="#">Window</a><a href="#">Help</a>
      </nav>
    </header>

    <nav class="ribbon-tabs">
      <a href="#" class="active">Home</a><a href="#">Mesh Modeling</a><a href="#">Render</a><a href="#">Insert</a><a href="#">Annotate</a><a href="#">View</a><a href="#">Manage</a><a href="#">Output</a>
      <button class="collapse" aria-label="Minimize ribbon"><i class="up"></i></button><i class="caret sm"></i>
    </nav>

    <div class="ribbon">
      <section class="panel modeling">
        <div class="tools">
          <button class="big"><svg class="i32"><use href="#i-box"/></svg><span>Box</span><i class="caret sm"></i></button>
          <button class="big"><svg class="i32"><use href="#i-extrude"/></svg><span>Extrude</span><i class="caret sm"></i></button>
          <div class="stack">
            <button><svg class="i16"><use href="#i-polysolid"/></svg>Polysolid</button>
            <button><svg class="i16"><use href="#i-planar"/></svg>Planar Surface</button>
            <button><svg class="i16"><use href="#i-press"/></svg>Press/Pull</button>
          </div>
        </div>
        <h3>Modeling<i class="caret"></i></h3>
      </section>

      <section class="panel mesh">
        <div class="tools">
          <button class="big"><svg class="i32"><use href="#i-ball"/></svg><span>Smooth<br>Object</span></button>
          <div class="stack">
            <button aria-label="Smooth more"><svg class="i16"><use href="#i-more"/></svg></button>
            <button aria-label="Smooth less"><svg class="i16"><use href="#i-less"/></svg></button>
            <button aria-label="Crease"><svg class="i16"><use href="#i-crease"/></svg></button>
          </div>
        </div>
        <h3>Mesh<svg class="launch"><use href="#i-launch"/></svg></h3>
      </section>

      <section class="panel solid">
        <div class="tools grid">
          <button aria-label="Union"><svg class="i16"><use href="#i-union"/></svg></button>
          <button aria-label="Interfere"><svg class="i16"><use href="#i-interfere"/></svg></button>
          <button class="wide"><svg class="i16"><use href="#i-edges"/></svg>Extract Edges<i class="caret sm"></i></button>
          <button aria-label="Subtract"><svg class="i16"><use href="#i-subtract"/></svg></button>
          <button aria-label="Slice"><svg class="i16"><use href="#i-slice"/></svg></button>
          <button class="wide"><svg class="i16"><use href="#i-faces"/></svg>Extrude Faces<i class="caret sm"></i></button>
          <button aria-label="Intersect"><svg class="i16"><use href="#i-intersect"/></svg></button>
          <button aria-label="Thicken"><svg class="i16"><use href="#i-thicken"/></svg></button>
          <button class="wide"><svg class="i16"><use href="#i-separate"/></svg>Separate<i class="caret sm"></i></button>
        </div>
        <h3>Solid Editing<i class="caret"></i></h3>
      </section>

      <section class="panel draw">
        <div class="tools grid">
          <button aria-label="Polyline"><svg class="i16"><use href="#i-pline"/></svg></button>
          <button aria-label="3D polyline"><svg class="i16"><use href="#i-3dpoly"/></svg></button>
          <button aria-label="Arc"><svg class="i16"><use href="#i-arc"/></svg></button><i class="caret sm"></i>
          <button aria-label="Spline"><svg class="i16"><use href="#i-spline"/></svg></button>
          <button aria-label="Line"><svg class="i16"><use href="#i-line"/></svg></button>
          <button aria-label="Circle"><svg class="i16"><use href="#i-circle"/></svg></button><i class="caret sm"></i>
          <button aria-label="Polygon"><svg class="i16"><use href="#i-polygon"/></svg></button>
          <button aria-label="Rectangle"><svg class="i16"><use href="#i-rect"/></svg></button>
          <button aria-label="Ellipse"><svg class="i16"><use href="#i-ellipse"/></svg></button><i class="caret sm"></i>
        </div>
        <h3>Draw<i class="caret"></i></h3>
      </section>

      <section class="panel modify">
        <div class="tools grid">
          <button aria-label="3D mirror"><svg class="i16"><use href="#i-mirror3d"/></svg></button>
          <button aria-label="3D move"><svg class="i16"><use href="#i-gizmo"/></svg></button>
          <button aria-label="Move"><svg class="i16"><use href="#i-move"/></svg></button>
          <button aria-label="Copy"><svg class="i16"><use href="#i-copy3"/></svg></button>
          <button aria-label="Trim"><svg class="i16"><use href="#i-trim"/></svg></button><i class="caret sm"></i>
          <button aria-label="3D align"><svg class="i16"><use href="#i-align3d"/></svg></button>
          <button aria-label="3D rotate"><svg class="i16"><use href="#i-rot3d"/></svg></button>
          <button aria-label="Rotate"><svg class="i16"><use href="#i-rotate"/></svg></button>
          <button aria-label="Stretch"><svg class="i16"><use href="#i-stretch"/></svg></button>
          <button aria-label="Fillet"><svg class="i16"><use href="#i-fillet"/></svg></button><i class="caret sm"></i>
          <button aria-label="3D array"><svg class="i16"><use href="#i-array"/></svg></button>
          <button aria-label="3D scale"><svg class="i16"><use href="#i-scale3d"/></svg></button>
          <button aria-label="Scale"><svg class="i16"><use href="#i-scale"/></svg></button>
          <button aria-label="Erase"><svg class="i16"><use href="#i-erase"/></svg></button>
          <button aria-label="Offset"><svg class="i16"><use href="#i-offset"/></svg></button>
        </div>
        <h3>Modify<i class="caret"></i></h3>
      </section>

      <section class="panel section">
        <div class="tools">
          <button class="big"><svg class="i32"><use href="#i-section"/></svg><span>Section<br>Plane</span></button>
        </div>
        <h3>Section<i class="caret"></i><svg class="launch"><use href="#i-launch"/></svg></h3>
      </section>

      <section class="panel view">
        <div class="tools combos">
          <div class="combo">
            <svg class="i16" viewBox="0 0 16 16"><path d="M0 0h16v16H0z" fill="#000"/><g fill="none" stroke="#9a9a9a"><circle cx="6.500" cy="10" r="4"/><path d="M7.500 3.500h6v6h-4"/></g></svg>
            <select aria-label="Visual style"><option>2D Wireframe</option></select><i class="caret"></i>
          </div>
          <div class="combo">
            <svg class="i16" viewBox="0 0 16 16"><path d="M.5 2.500h15v11H.5z" fill="#5a6270" stroke="#eee"/><path d="M3 14V5h12M6 14V8h9M3 5l3 3M10 10v4" stroke="#eee" fill="none"/></svg>
            <select aria-label="Saved views"><option>Unsaved View</option></select><i class="caret"></i>
          </div>
        </div>
        <h3>View<i class="caret"></i></h3>
      </section>

      <section class="panel subobject">
        <div class="tools">
          <button class="big"><svg class="i32"><use href="#i-filter"/></svg><span>No Filter</span><i class="caret sm"></i></button>
          <button class="big"><svg class="i32"><use href="#i-gizmo-l"/></svg><span>Move<br>Gizmo</span></button>
          <i class="caret sm side"></i>
        </div>
        <h3>Subobject</h3>
      </section>

      <section class="panel layers">
        <div class="tools combos">
          <div class="icon-row">
            <button aria-label="Layer properties"><svg class="i16"><use href="#i-lay1"/></svg></button>
            <button aria-label="Isolate"><svg class="i16"><use href="#i-lay2"/></svg></button>
            <button aria-label="Match layer"><svg class="i16"><use href="#i-lay3"/></svg></button>
            <button aria-label="Previous layer"><svg class="i16"><use href="#i-lay4"/></svg></button>
            <button aria-label="Layer walk"><svg class="i16"><use href="#i-lay5"/></svg></button>
            <button aria-label="Layer unisolate"><svg class="i16"><use href="#i-lay6"/></svg></button>
            <button aria-label="Freeze"><svg class="i16"><use href="#i-lay7"/></svg></button>
            <button aria-label="Layer off"><svg class="i16"><use href="#i-lay8"/></svg></button>
          </div>
          <div class="combo"><select aria-label="Layer state"><option>Unsaved Layer State</option></select><i class="caret"></i></div>
          <div class="combo layer">
            <svg class="i16"><use href="#i-bulb"/></svg><svg class="i16"><use href="#i-sun"/></svg><svg class="i16"><use href="#i-lock"/></svg><span class="swatch"></span>
            <select aria-label="Layer"><option>0</option></select><i class="caret"></i>
          </div>
        </div>
        <h3>Layers<i class="caret"></i></h3>
      </section>

      <section class="panel properties">
        <div class="tools combos">
          <div class="prop"><svg class="i16"><use href="#i-wheel"/></svg><div class="combo color"><span class="swatch"></span><select aria-label="Object color"><option>ByLayer</option></select><i class="caret"></i></div></div>
          <div class="prop"><svg class="i16"><use href="#i-lweight"/></svg><div class="combo"><span class="sample"></span><select aria-label="Lineweight"><option>ByLayer</option></select><i class="caret"></i></div></div>
          <div class="prop"><svg class="i16"><use href="#i-ltype"/></svg><div class="combo"><span class="sample"></span><select aria-label="Linetype"><option>ByLayer</option></select><i class="caret"></i></div></div>
        </div>
        <h3>Properties<i class="caret"></i><svg class="launch"><use href="#i-launch"/></svg></h3>
      </section>

      <section class="panel utilities">
        <div class="tools">
          <button class="big"><svg class="i32"><use href="#i-measure"/></svg><span>Measure</span><i class="caret sm"></i></button>
          <div class="stack">
            <button aria-label="Quick select"><svg class="i16"><use href="#i-qsel"/></svg></button>
            <button aria-label="Select all"><svg class="i16"><use href="#i-selall"/></svg></button>
            <button aria-label="Calculator"><svg class="i16"><use href="#i-calc"/></svg></button>
          </div>
        </div>
        <h3>Utilities<i class="caret"></i></h3>
      </section>

      <section class="panel clipboard">
        <div class="tools">
          <button class="big"><svg class="i32"><use href="#i-paste"/></svg><span>Paste</span><i class="caret sm"></i></button>
          <div class="stack">
            <button aria-label="Cut"><svg class="i16"><use href="#i-cut"/></svg></button>
            <button aria-label="Copy clip"><svg class="i16"><use href="#i-copyclip"/></svg></button>
            <button aria-label="Match properties"><svg class="i16"><use href="#i-match"/></svg></button>
          </div>
        </div>
        <h3>Clipboard</h3>
      </section>

      <section class="panel baseview">
        <div class="tools">
          <button class="big"><svg class="i32"><use href="#i-base"/></svg><span>Base</span><i class="caret sm"></i></button>
        </div>
        <h3>View<i class="caret"></i><svg class="launch"><use href="#i-launch"/></svg></h3>
      </section>
    </div>

    <div class="doc-tabs">
      <button class="doc">Start</button>
      <button class="doc">Drawing1*<span class="close">✕</span></button>
      <button class="doc active">Bbot room*<span class="close">✕</span></button>
      <button class="add" aria-label="New tab"><svg viewBox="0 0 10 10"><path d="M5 1v8M1 5h8" stroke="#a8adb5" stroke-width="2"/></svg></button>
    </div>

    <main class="workarea">
      <aside class="palette">
        <h2><i class="grip"></i>MICROVELLUM</h2>
        <div class="palette-body">
          <div class="side-icons">
            <button class="help" aria-label="Help">?</button>
            <div class="tiles">
              <button aria-label="Draw tools"><svg><use href="#p-pen"/></svg></button>
              <button aria-label="Fingerprint"><svg><use href="#p-spiral"/></svg></button>
              <button aria-label="Solids"><svg><use href="#p-cube"/></svg></button>
              <button aria-label="Camera"><svg><use href="#p-camera"/></svg></button>
            </div>
            <i class="dots"></i>
            <div class="render-icons">
              <button aria-label="Wireframe"><svg><use href="#p-wire"/></svg></button>
              <button aria-label="Hidden"><svg><use href="#p-wire2"/></svg></button>
              <button aria-label="Realistic"><svg><use href="#p-ball"/></svg></button>
              <button aria-label="Render"><svg><use href="#p-pot"/></svg></button>
              <button aria-label="Render settings"><svg><use href="#p-pot2"/></svg></button>
              <button aria-label="Materials"><svg><use href="#p-sphere"/></svg></button>
              <button aria-label="Walk and fly"><svg><use href="#p-plane"/></svg></button>
              <button aria-label="Walk"><svg><use href="#p-feet"/></svg></button>
              <button aria-label="Background"><svg><use href="#p-pic"/></svg></button>
            </div>
            <div class="tiles bottom">
              <button aria-label="Favorites"><svg><use href="#p-fav"/></svg></button>
              <button aria-label="Options"><svg><use href="#i-gear-thin"/></svg></button>
            </div>
          </div>

          <div class="toolbox">
            <nav class="tb-menu">
              <a href="#">Company Setup</a><a href="#"><u>T</u>oolbox Setup</a><a href="#">Other</a><a href="#"><u>H</u>elp</a>
            </nav>
            <h4>Modify</h4>
            <button class="group">Modify Room Components</button>
            <button class="group">Modify Products</button>
            <div class="list-wrap">
              <ul class="tool-list">
                <li><button aria-label="Move"><svg><use href="#p-movetip"/></svg></button></li>
                <li><button><svg><use href="#p-rotate"/></svg>Rotate</button></li>
                <li><button><svg><use href="#p-copy"/></svg>Copy</button></li>
                <li><button><svg><use href="#p-swap"/></svg>Change Door Style</button></li>
                <li><button><svg><use href="#p-bump"/></svg>Bump Product</button></li>
                <li><button><svg><use href="#p-join"/></svg>Join Product Elements</button></li>
                <li><button><svg viewBox="0 0 24 24"><text x="1" y="9" class="num">1,2,3</text><path d="M0 5h24" stroke="#222" stroke-width="1.500"/><text x="1" y="20" class="num num-b">4,5,6</text></svg>ReNumber Products</button></li>
                <li><button><svg viewBox="0 0 24 24"><text x="1" y="9" class="num">1,2,3</text><path d="M0 5h24" stroke="#222" stroke-width="1.500"/><text x="1" y="20" class="num num-b">4,5,6</text></svg>Refresh Item Numbers fr...</button></li>
                <li><button><svg><use href="#p-floppy"/></svg>Save Product to Library</button></li>
                <li><button><svg><use href="#p-group"/></svg>Group Products</button></li>
                <li><button><svg><use href="#p-align"/></svg>Align Products</button></li>
                <li><button><svg><use href="#p-pen"/></svg>Redraw Selected Products</button></li>
                <li><button><svg><use href="#p-grid"/></svg>Edit Design Data</button></li>
                <li><button><svg viewBox="0 0 24 24"><path d="M1 2h22v20H1z" fill="#fff" stroke="#000" stroke-width="1.600"/><text x="4" y="11" class="lst">list</text><path d="M2 14h20M2 17h20M2 20h20" stroke="#777"/></svg>Parts List Review</button></li>
                <li><button><svg><use href="#p-wall"/></svg>Adjust Wall Length</button></li>
                <li><button><svg><use href="#p-mirror"/></svg>Mirror Products</button></li>
                <li><button><svg><use href="#p-iso"/></svg>Isolate Selected Entites</button></li>
              </ul>
              <div class="vscroll">
                <svg viewBox="0 0 8 6"><path d="M1 5l3-3 3 3" fill="none" stroke="#555" stroke-width="2"/></svg>
                <i class="thumb"></i>
                <svg viewBox="0 0 8 6"><path d="M1 1l3 3 3-3" fill="none" stroke="#555" stroke-width="2"/></svg>
              </div>
            </div>
            <button class="group">Product Detailing</button>
            <button class="group">Modify Subassemblies</button>
            <button class="group">Modify Parts</button>
            <div class="categories">
              <button>Project</button>
              <button>Draw</button>
              <button class="active">Modify</button>
              <button>Solid Modeling</button>
              <button>Product Viewer</button>
              <div class="blank"></div>
            </div>
          </div>

          <div class="right-icons">
            <i class="dots"></i>
            <button class="opt" aria-label="Settings"><svg><use href="#i-gear-thin"/></svg></button>
            <button aria-label="Product form"><svg><use href="#p-form2"/></svg></button>
            <button aria-label="Configure"><svg><use href="#i-gear-thin"/></svg></button>
            <button aria-label="Design data"><svg><use href="#p-grid"/></svg></button>
            <button aria-label="Drawing sheet"><svg><use href="#p-dwg"/></svg></button>
            <button aria-label="Redraw"><svg><use href="#p-pen"/></svg></button>
            <div class="arrows">
              <svg viewBox="0 0 6 8"><path d="M5 1L2 4l3 3" fill="none" stroke="#333" stroke-width="2"/></svg>
              <svg viewBox="0 0 6 8"><path d="M1 1l3 3-3 3" fill="none" stroke="#333" stroke-width="2"/></svg>
            </div>
          </div>
        </div>
      </aside>

      <div class="drawing">
        <div class="canvas">
          <svg class="model">
            <!-- tracking guides -->
            <path d="M510.500 10V455" stroke="#8d939b" stroke-dasharray="1 12"/>
            <line x1="603" y1="459.500" x2="100%" y2="459.500" stroke="#8d939b" stroke-dasharray="1 12"/>
            <!-- dimension -->
            <g stroke="#f5821f" fill="none"><path d="M506 435.500h82M510.500 430v26M585.500 430v26M508 438l5-5M583 438l5-5"/></g>
            <text x="547" y="429" class="dim-text">36"</text>
            <!-- cabinet plan -->
            <g fill="none">
              <path d="M512.500 461.500h71v45h-71zM513 469.500h70M513 496.500h70" stroke="#f5b478"/>
              <path d="M510.500 459.500h75v50h-75z" stroke="#f07fe0"/>
              <path d="M513 501h70" stroke="#1188ff" stroke-width="2"/>
              <path d="M518 501h64" stroke="#1fc41f" stroke-width="2" stroke-dasharray="2 8"/>
              <path d="M511 505.500h74" stroke="#b07cf0"/>
              <path d="M512 507.500h72" stroke="#8f9298" stroke-width="2" stroke-dasharray="5 3"/>
              <path d="M531.500 473.500h33v9h-33z" stroke="#1188ff"/>
            </g>
            <g fill="#9a9a9a"><circle cx="515" cy="466" r="4.500"/><circle cx="580" cy="466" r="4.500"/><circle cx="515" cy="497" r="4.500"/><circle cx="580" cy="497" r="4.500"/></g>
            <path d="M547 467h3" stroke="#f5b478" stroke-width="2"/>
            <g stroke="#c4c4c4" fill="none">
              <path d="M514 510l12 6M581 510l-12 6" stroke-dasharray="5 6"/>
              <path d="M532 518l10 7 5-20M530 520l11 6M563 518l-10 7-5-20M565 520l-11 6"/>
            </g>
            <text x="548" y="482" class="tag-text">101</text>
            <text x="547" y="539" class="name-text">Base 2 Door</text>
          </svg>
          <div class="view-label">[−][Top][2D Wireframe]</div>
          <div class="viewcube">
            <svg viewBox="0 0 120 120"><circle cx="60" cy="60" r="53" fill="none" stroke="#444a58" stroke-width="14"/></svg>
            <span class="n">N</span><span class="w">W</span><span class="s">S</span>
            <button class="face">TOP</button>
          </div>
          <button class="wcs">WCS<svg viewBox="0 0 8 5"><path d="M.5 .5h7L4 4.500z" fill="none" stroke="#d8dade"/></svg></button>
          <svg class="ucs" viewBox="0 0 76 74"><g fill="none" stroke="#fff"><path d="M5.500 17v50.500H56M.5 62.500h9v9h-9zM7 .5l6.500 6 6-6M13.500 6.500V13M60 54l13 13M73 54L60 67"/></g></svg>
          <svg class="cursor" viewBox="0 0 12 19"><path d="M.5 .5v15l3.500-3 2.500 5.500 2.500-1-2.500-5.500h5z" fill="#fff" stroke="#222"/></svg>
        </div>
        <div class="hscroll">
          <svg viewBox="0 0 6 8"><path d="M5 1L2 4l3 3" fill="none" stroke="#333" stroke-width="2"/></svg>
          <i class="thumb"></i>
        </div>
        <div class="command">
          <div class="cmd-tools">
            <i class="grip"></i>
            <svg viewBox="0 0 10 10"><path d="M1 1l8 8M9 1L1 9" stroke="#dcdcdc" stroke-width="2"/></svg>
            <svg><use href="#i-wrench"/></svg>
          </div>
          <div class="cmd-main">
            <div class="history">Please select a part:<br>Command:</div>
            <label class="prompt">
              <svg viewBox="0 0 16 12"><path d="M.5 .5h15v11H.5zM3 4l3 2-3 2M7 9h4" fill="none" stroke="#555"/></svg>
              <i class="caret"></i>
              <input type="text" placeholder="Type a command" aria-label="Command">
            </label>
          </div>
        </div>
      </div>
    </main>

    <footer class="statusbar">
      <div class="layouts">
        <button class="active">Model</button><button>COVER</button><button>SH01</button><button>SH02</button><button>DETAIL</button><button>3D</button><button>VBASE</button><button class="add" aria-label="New layout"><svg viewBox="0 0 10 10"><path d="M5 1v8M1 5h8" stroke="#a8adb5" stroke-width="2"/></svg></button>
      </div>
      <div class="toggles">
        <div class="set"><button class="text">MODEL</button></div>
        <div class="set"><button aria-label="Grid"><svg class="i16"><use href="#s-grid"/></svg></button><button aria-label="Snap"><svg class="i16"><use href="#s-snap"/></svg></button><i class="caret"></i></div>
        <div class="set"><button aria-label="Ortho"><svg class="i16"><use href="#s-ortho"/></svg></button><button class="on" aria-label="Polar"><svg class="i16"><use href="#s-polar"/></svg></button><i class="caret"></i><button aria-label="Isodraft"><svg class="i16"><use href="#s-iso"/></svg></button><i class="caret"></i></div>
        <div class="set snug"><button class="on" aria-label="Tracking"><svg class="i16"><use href="#s-track"/></svg></button><button class="on" aria-label="Object snap"><svg class="i16"><use href="#s-osnap"/></svg></button><i class="caret"></i></div>
        <div class="set"><button class="on" aria-label="Annotation visibility"><svg class="i16"><use href="#s-man1"/></svg></button><button aria-label="Auto scale"><svg class="i16"><use href="#s-man2"/></svg></button><button aria-label="Annotation scale"><svg class="i16"><use href="#s-man"/></svg></button><button class="text scale">3/8" = 1'-0"<i class="caret"></i></button></div>
        <div class="set"><button aria-label="Workspace"><svg class="i16"><use href="#i-gear"/></svg></button><i class="caret"></i></div>
        <div class="set"><button aria-label="Monitor"><svg class="i16"><use href="#s-plus"/></svg></button></div>
        <div class="set"><button aria-label="Isolate objects"><svg class="i16"><use href="#s-shapes"/></svg></button></div>
        <div class="set"><button aria-label="Graphics performance"><svg class="i16"><use href="#s-gfx"/></svg></button></div>
      </div>
    </footer>
  </div>

</body>
</html>
```
FILE: styles.css
```
:root {
  --dark: #222933;
  --panel: #3b4453;
  --title: #465061;
  --field: #4b566a;
  --text: #e6e8ea;
  --muted: #b4b8be;
  --ui: "Open Sans", "Noto Sans", sans-serif;
  --classic: "Liberation Sans", Arial, sans-serif;
}

* {
  box-sizing: border-box;
}

body {
  margin: 0;
  padding: 1px 0 0 4px;
  height: 100vh;
  background: #0b0c0d;
  color: var(--text);
  font: 12px/15px var(--ui);
  overflow: hidden;
}

button, select, input {
  margin: 0;
  padding: 0;
  border: none;
  background: none;
  color: inherit;
  font: inherit;
}

a {
  color: inherit;
  text-decoration: none;
}

svg {
  display: block;
  flex: none;
}

h2, h3, h4, ul {
  margin: 0;
  padding: 0;
  font-weight: normal;
}

.sprite {
  position: absolute;
  width: 0;
  height: 0;
}

.i16 {
  width: 16px;
  height: 16px;
}

.i32 {
  width: 32px;
  height: 32px;
}

.caret {
  flex: none;
  width: 8px;
  height: 4px;
  background: #dcdcdc;
  clip-path: polygon(0 0, 100% 0, 50% 100%);
}

.caret.sm {
  width: 6px;
  height: 3px;
}

.caret.dim {
  background: #9aa1ab;
}

.app {
  display: flex;
  flex-direction: column;
  height: 100%;
  border-top: 1px solid #0c83cc;
  border-left: 1px solid #0c83cc;
  background: var(--dark);
}

/* title bar */
.titlebar {
  height: 48px;
  background: var(--title);
}

.title-row {
  display: flex;
  align-items: center;
  height: 28px;
  padding-left: 3px;
}

.app-button {
  width: 41px;
  height: 23px;
  border: 1px solid #1c222b;
}

.app-button svg {
  width: 39px;
  height: 21px;
}

.quick {
  display: flex;
  gap: 8px;
  margin-left: 9px;
}

.quick button {
  display: flex;
  align-items: center;
  gap: 6px;
}

.combo {
  position: relative;
  display: flex;
  align-items: center;
  gap: 2px;
  height: 22px;
  padding: 0 4px 0 2px;
  border: 1px solid #262d39;
  background: var(--field);
}

.combo select {
  flex: 1;
  min-width: 0;
  height: 20px;
  appearance: none;
  outline: none;
}

.workspace {
  width: 180px;
  margin-left: 4px;
  padding: 0 1px 0 3px;
  background: #3f4858;
}

.workspace select {
  color: #fff;
}

.customize {
  margin-left: 4px;
  padding-top: 2px;
  border-top: 1px solid #dcdcdc;
}

.customize .caret {
  display: block;
}

.doc-title {
  display: flex;
  flex: 1;
  justify-content: center;
  gap: 16px;
  padding-right: 16px;
  color: #a3a8b0;
}

.minimize {
  width: 6px;
  height: 2px;
  background: #eee;
}

.menubar {
  display: flex;
  gap: 22px;
  padding-left: 17px;
  line-height: 20px;
  color: var(--muted);
}

/* ribbon */
.ribbon-tabs {
  display: flex;
  gap: 1px;
  align-items: flex-end;
  height: 24px;
  padding-left: 7px;
  color: var(--muted);
}

.ribbon-tabs a {
  padding: 0 9px;
  line-height: 20px;
}

.ribbon-tabs .active {
  background: var(--panel);
  color: #fff;
}

.collapse {
  display: flex;
  align-items: center;
  justify-content: center;
  width: 15px;
  height: 8px;
  margin: 0 3px 5px 19px;
  background: #eee;
}

.collapse .up {
  width: 6px;
  height: 3px;
  background: #555;
  clip-path: polygon(0 100%, 100% 100%, 50% 0);
}

.collapse + .caret {
  margin-bottom: 7px;
}

.ribbon {
  display: flex;
  flex: none;
  height: 99px;
  margin-left: 4px;
  background: var(--panel);
}

.panel {
  display: flex;
  flex: none;
  flex-direction: column;
  height: 98px;
  border-right: 1px solid var(--dark);
}

.panel h3 {
  display: flex;
  align-items: center;
  justify-content: center;
  gap: 7px;
  height: 18px;
  font-size: 12px;
}

.launch {
  width: 6px;
  height: 6px;
}

.tools {
  display: flex;
  height: 79px;
  padding-top: 4px;
}

.tools button {
  white-space: nowrap;
}

.big {
  display: flex;
  flex-direction: column;
  align-items: center;
  padding-top: 4px;
}

.big span {
  margin-top: 2px;
}

.big .caret {
  margin-top: 4px;
}

.stack {
  display: flex;
  flex-direction: column;
}

.stack button, .wide {
  display: flex;
  align-items: center;
  gap: 5px;
  height: 24px;
}

.tools.grid {
  display: grid;
  grid-auto-rows: 24px;
  align-items: center;
  justify-items: center;
}

.wide {
  justify-self: start;
}

.modeling { width: 216px; }
.modeling .big { width: 48px; }
.modeling .big + .big { width: 56px; }
.modeling .stack { margin-left: 8px; }

.mesh { width: 78px; }
.mesh .big { width: 50px; }
.mesh .stack { margin-left: 5px; }
.mesh h3 { gap: 20px; padding-left: 14px; }

.solid { width: 173px; }
.solid .grid { grid-template-columns: 30px 26px 1fr; }
.solid .wide { margin-left: 4px; }

.draw { width: 94px; }
.draw .grid { grid-template-columns: 24px 24px 32px 8px; padding-left: 3px; }

.modify { width: 145px; }
.modify .grid { grid-template-columns: 24px 30px 20px 34px 20px 12px; padding-left: 2px; }

.section { width: 76px; }
.section .big { width: 76px; }

.view { width: 205px; }
.view .combos { padding: 17px 2px 0; }
.view .combo { padding-right: 3px; }

.subobject { width: 120px; }
.subobject .big { width: 68px; }
.subobject .big + .big { width: 46px; }
.subobject .side { margin: 55px 0 0 -3px; }

.combos {
  flex-direction: column;
  gap: 2px;
}

.layers { width: 213px; }
.layers .combos { padding: 4px 10px 0 2px; }

.icon-row {
  display: flex;
  justify-content: space-between;
  height: 23px;
  padding: 3px 0 4px 4px;
  margin-right: -6px;
}

.layer {
  gap: 3px;
  padding-right: 2px;
}

.swatch {
  width: 14px;
  height: 14px;
  margin: 0 3px 0 3px;
  background: #fff;
}

.color .swatch {
  width: 16px;
  height: 16px;
  margin-left: 4px;
  margin-right: 2px;
}

.sample {
  width: 64px;
  height: 1px;
  margin-left: 4px;
  background: #fff;
}

.properties { width: 205px; }
.properties .combos { padding: 5px 2px 0 4px; }
.prop { display: flex; align-items: center; gap: 2px; }
.prop .combo { flex: 1; padding-right: 1px; }
.properties h3 { justify-content: flex-end; padding-right: 5px; }
.properties .launch { margin-left: 58px; }

.utilities { width: 97px; }
.utilities .big { width: 72px; }
.utilities .stack { margin-left: 2px; }

.clipboard { width: 80px; }
.clipboard .big { width: 55px; }
.clipboard .stack { margin-left: 2px; }

.baseview { border-right: none; padding-left: 3px; width: 59px; }
.baseview .big { width: 56px; }

/* drawing tabs */
.doc-tabs {
  display: flex;
  flex: none;
  align-items: flex-end;
  height: 30px;
  padding-left: 25px;
  border-bottom: 4px solid var(--panel);
}

.doc {
  display: flex;
  align-items: center;
  justify-content: space-between;
  width: 123px;
  height: 21px;
  padding: 0 13px 0 9px;
  border-radius: 10px 10px 0 0;
  background: #2c3440;
  color: var(--muted);
}

.doc.active {
  background: var(--panel);
  color: #fff;
  font-weight: bold;
}

.close {
  color: #a8adb5;
  font: bold 12px/15px "DejaVu Sans", sans-serif;
}

.doc-tabs .add {
  display: flex;
  align-items: center;
  justify-content: center;
  width: 22px;
  height: 14px;
  margin: 0 0 4px 6px;
  border-radius: 6px;
  background: #2f3743;
}

.add svg {
  width: 10px;
  height: 10px;
}

/* work area */
.workarea {
  display: flex;
  flex: 1;
  min-height: 0;
  background: var(--panel);
}

.palette {
  display: flex;
  flex: none;
  flex-direction: column;
  width: 284px;
  padding: 2px 1px 4px 3px;
  background: linear-gradient(to right, var(--dark) 3px, var(--panel) 3px);
  color: #000;
  font: 12px/15px var(--classic);
}

.palette h2 {
  display: flex;
  align-items: center;
  gap: 6px;
  height: 22px;
  padding: 0 0 4px 6px;
  background: #2b303d;
  color: #e6e8ea;
  font: 12px/15px var(--ui);
}

.palette h2 .grip {
  width: 3px;
  height: 9px;
  margin-top: 6px;
  background: repeating-linear-gradient(#b4b4b4 0 1px, #2b303d 1px 2px);
}

.palette-body {
  display: flex;
  flex: 1;
  min-height: 0;
  background: #f0f0f0;
}

.side-icons {
  display: flex;
  flex: none;
  flex-direction: column;
  width: 45px;
  border-right: 1px solid #a0a0a0;
}

.side-icons svg {
  width: 24px;
  height: 24px;
  color: #fff;
}

.help {
  width: 42px;
  height: 28px;
  margin: 1px;
  border: 1px solid #9fb6cc;
  background: radial-gradient(circle 11px, #9a9a9a 10px, transparent 11px) #e9e9e9;
  color: #fff;
  font: bold 18px/24px var(--classic);
}

.tiles {
  display: flex;
  flex-direction: column;
  gap: 4px;
  padding: 2px 3px;
  background: linear-gradient(#d0d0d0 1px, #fff 1px) 0 -2px / 100% 36px;
}

.tiles button {
  display: flex;
  align-items: center;
  justify-content: center;
  width: 38px;
  height: 32px;
  border: 1px solid #16324a;
  background: linear-gradient(#0060b4, #0a8cf4);
}

.tiles.bottom {
  margin-top: auto;
}

.dots {
  flex: none;
  height: 2px;
  margin: 3px 10px 0 4px;
  background: repeating-linear-gradient(to right, #b0b0b0 0 2px, transparent 2px 4px);
}

.render-icons {
  display: flex;
  flex-direction: column;
  gap: 7px;
  padding: 7px 9px;
}

.render-icons button {
  width: 24px;
  height: 24px;
}

.toolbox {
  display: flex;
  flex: 1;
  flex-direction: column;
  min-width: 0;
}

.tb-menu {
  display: flex;
  flex-wrap: wrap;
  gap: 0 16px;
  height: 44px;
  padding: 2px 9px 0;
  background: #fbfbfb;
  line-height: 21px;
}

.toolbox h4 {
  height: 25px;
  padding-left: 7px;
  background: #9f9f9f;
  color: #fff;
  font: bold 16px/25px var(--classic);
}

.group {
  flex: none;
  height: 18px;
  padding: 2px 0 0 4px;
  border-bottom: 1px solid #b4b4b4;
  background: #fcfcfc;
  text-align: left;
}

.list-wrap {
  display: flex;
  flex: 1;
  min-height: 0;
  overflow: hidden;
}

.tool-list {
  flex: 1;
  margin-top: -21px;
  list-style: none;
}

.tool-list button {
  display: flex;
  align-items: center;
  gap: 6px;
  height: 29px;
  padding-left: 4px;
  white-space: nowrap;
}

.tool-list svg {
  width: 24px;
  height: 24px;
}

.num {
  font: bold 9px var(--classic);
  fill: #222;
}

.num-b {
  fill: #1b6fb8;
}

.lst {
  font: bold 8px "DejaVu Sans", sans-serif;
}

.vscroll {
  display: flex;
  flex-direction: column;
  align-items: center;
  width: 17px;
  padding: 6px 1px;
  border-right: 1px solid #b4b4b4;
  background: #f3f3f3;
}

.vscroll svg {
  width: 8px;
  height: 6px;
}

.vscroll .thumb {
  flex: 1;
  width: 15px;
  margin: 111px 0 41px;
  background: #cdcdcd;
}

.categories {
  flex: none;
  border-right: 1px solid #a0a0a0;
}

.categories button, .blank {
  display: block;
  width: 100%;
  height: 24px;
  padding-left: 10px;
  border-top: 1px solid #a0a0a0;
  background: linear-gradient(#fff, #f0f0f0);
  font-weight: bold;
  text-align: left;
}

.categories .active {
  background: #d9e9f9;
}

.blank {
  height: 25px;
  border-bottom: 1px solid #a0a0a0;
}

.right-icons {
  display: flex;
  flex: none;
  flex-direction: column;
  align-items: center;
  gap: 7px;
  width: 26px;
  padding-left: 1px;
  background: #fbfbfb;
}

.right-icons .dots {
  width: 19px;
  margin: 3px 0 0;
}

.right-icons button svg {
  width: 22px;
  height: 24px;
}

.right-icons .opt {
  width: 100%;
  padding: 1px 5px 6px;
  border-bottom: 1px solid #b8b8b8;
}

.right-icons .opt svg {
  width: 14px;
  height: 14px;
}

.arrows {
  display: flex;
  align-items: center;
  gap: 8px;
  height: 17px;
  margin-top: auto;
}

.arrows svg {
  width: 6px;
  height: 8px;
}

.drawing {
  display: flex;
  flex: 1;
  flex-direction: column;
  min-width: 0;
}

.canvas {
  position: relative;
  flex: 1;
  min-height: 0;
  overflow: hidden;
  background: #212831;
}

.model {
  position: absolute;
  inset: 0;
  width: 100%;
  height: 100%;
}

.dim-text, .name-text, .tag-text {
  font: 9px "DejaVu Sans", sans-serif;
  text-anchor: middle;
}

.dim-text {
  fill: #e01818;
}

.name-text {
  fill: #d8d8d8;
}

.tag-text {
  fill: #fff;
}

.view-label {
  position: absolute;
  left: 3px;
  top: 6px;
}

.viewcube {
  position: absolute;
  top: 22px;
  right: -20px;
  width: 120px;
  height: 120px;
  color: #bfc1c4;
  font: bold 20px/20px var(--classic);
}

.viewcube span, .face {
  position: absolute;
}

.n { top: -5px; left: 53px; }
.w { top: 51px; left: -6px; }
.s { bottom: -6px; left: 53px; }

.face {
  top: 34px;
  left: 34px;
  width: 52px;
  height: 52px;
  border: 10px solid #b4b6b5;
  background: #a8acb5;
  color: #4a4f58;
  font: bold 12px/30px var(--ui);
}

.wcs {
  position: absolute;
  top: 169px;
  right: 16px;
  display: flex;
  align-items: center;
  gap: 5px;
  width: 48px;
  height: 18px;
  padding-left: 4px;
  border: 1px solid #8a8d99;
  border-radius: 4px;
  background: #9fa2af;
  color: #5d616d;
  font: 11px/16px var(--classic);
}

.wcs svg {
  width: 8px;
  height: 5px;
}

.ucs {
  position: absolute;
  left: 13px;
  bottom: 13px;
  width: 76px;
  height: 74px;
}

.cursor {
  position: absolute;
  left: 159px;
  top: 390px;
  width: 12px;
  height: 19px;
}

.hscroll {
  display: flex;
  flex: none;
  align-items: center;
  gap: 176px;
  height: 17px;
  padding-left: 5px;
  background: #f0f0f0;
}

.hscroll svg {
  width: 6px;
  height: 8px;
}

.hscroll .thumb {
  width: 17px;
  height: 15px;
  background: #cdcdcd;
}

.command {
  display: flex;
  flex: none;
  height: 59px;
  border-top: 2px solid var(--panel);
  background: #222a35;
}

.cmd-tools {
  display: flex;
  flex-direction: column;
  align-items: center;
  gap: 7px;
  width: 25px;
  padding: 4px 3px 0 0;
  background: #2b303d;
}

.cmd-tools .grip {
  width: 17px;
  height: 5px;
  background: repeating-linear-gradient(to right, #c4c4c4 0 2px, transparent 2px 3px);
}

.cmd-tools svg {
  width: 10px;
  height: 10px;
}

.cmd-tools svg:last-child {
  width: 15px;
  height: 15px;
  margin-top: 5px;
}

.cmd-main {
  flex: 1;
  padding-top: 1px;
  color: #1c1c1c;
  font: 12px/15px "Liberation Mono", monospace;
}

.history {
  height: 35px;
  padding: 5px 2px 0;
  background: #c8c8c8;
}

.prompt {
  display: flex;
  align-items: center;
  gap: 3px;
  height: 20px;
  margin-top: 1px;
  padding-left: 4px;
  background: #fff;
}

.prompt svg {
  width: 16px;
  height: 12px;
}

.prompt .caret {
  background: #555;
}

.prompt input {
  flex: 1;
  margin-left: 3px;
  outline: none;
}

.prompt input::placeholder {
  color: #6e6e6e;
  font-style: italic;
}

/* status bar */
.statusbar {
  display: flex;
  flex: none;
  justify-content: space-between;
  height: 33px;
  border-top: 2px solid var(--panel);
}

.layouts {
  display: flex;
  padding-left: 15px;
  color: var(--muted);
}

.layouts button {
  height: 17px;
  padding: 0 10px 2px;
  margin-right: 1px;
  border-radius: 0 0 8px 8px;
  background: #2b333f;
}

.layouts .active {
  background: var(--panel);
  color: #fff;
  font-weight: bold;
}

.layouts .add {
  padding: 0 8px;
}

.toggles {
  display: flex;
  gap: 3px;
  padding-top: 1px;
  margin-right: -6px;
}

.set {
  display: flex;
  align-items: center;
  height: 24px;
  padding-right: 1px;
  background: var(--panel);
}

.set button {
  display: flex;
  align-items: center;
  justify-content: center;
  width: 24px;
  height: 22px;
}

.set .caret {
  margin: 0 4px;
}

.set .on {
  background: #5f92c4;
}

.set .text {
  width: auto;
  padding-left: 4px;
  color: #fff;
}

.set .scale {
  gap: 6px;
  padding: 0 3px 0 5px;
}

.scale .caret {
  margin: 0;
}

.snug {
  gap: 1px;
  margin-left: -4px;
  padding-right: 0;
}

.snug .caret {
  margin-left: 2px;
}

.set:nth-last-child(-n+3) {
  padding-right: 0;
}
```
